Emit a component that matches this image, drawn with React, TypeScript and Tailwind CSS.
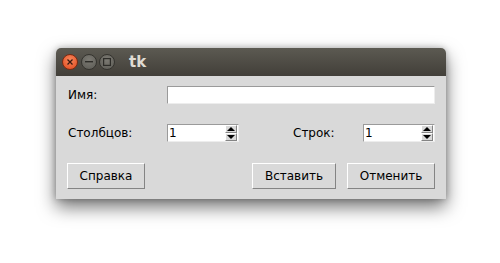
import type { ReactNode } from 'react';

function TitleButton({ kind }: { kind: 'close' | 'min' | 'max' }) {
  if (kind === 'close') {
    return (
      <div className="w-[16px] h-[16px] rounded-full border border-[#7a2a12] bg-[radial-gradient(circle_at_50%_35%,#f7875c,#e0481c)] flex items-center justify-center">
        <svg width="6" height="6" viewBox="0 0 6 6">
          <path d="M0.5 0.5 L5.5 5.5 M5.5 0.5 L0.5 5.5" stroke="#3a1a10" strokeWidth="1.3" />
        </svg>
      </div>
    );
  }
  return (
    <div className="w-[16px] h-[16px] rounded-full border border-[#35342f] bg-[radial-gradient(circle_at_50%_35%,#7c7a73,#5b5a54)] flex items-center justify-center">
      {kind === 'min' ? (
        <svg width="8" height="2" viewBox="0 0 8 2">
          <rect x="0" y="0" width="8" height="1.4" fill="#2e2d29" />
        </svg>
      ) : (
        <svg width="8" height="8" viewBox="0 0 8 8">
          <rect x="0.6" y="0.6" width="6.8" height="6.8" fill="none" stroke="#2e2d29" strokeWidth="1.2" />
        </svg>
      )}
    </div>
  );
}

function Button({ children, w }: { children: ReactNode; w: string }) {
  return (
    <button
      className={`${w} h-[26px] bg-[#d9d9d9] border border-t-white border-l-white border-b-[#848484] border-r-[#848484] text-[12px] text-black flex items-center justify-center`}
    >
      {children}
    </button>
  );
}

function Arrow({ up }: { up: boolean }) {
  return (
    <div className="h-[8px] w-[12px] bg-[#d9d9d9] border border-t-white border-l-white border-b-[#848484] border-r-[#848484] flex items-center justify-center">
      <svg width="8" height="4" viewBox="0 0 8 4">
        <path d={up ? 'M0 4 L4 0 L8 4 Z' : 'M0 0 L8 0 L4 4 Z'} fill="#000" />
      </svg>
    </div>
  );
}

function Spinbox() {
  return (
    <div className="w-[72px] h-[18px] bg-white border border-t-[#9a9a9a] border-l-[#9a9a9a] border-b-[#ededed] border-r-[#ededed] flex items-center">
      <span className="flex-1 pl-[1px] text-[12px] leading-none text-black">1</span>
      <div className="flex flex-col mr-[1px]">
        <Arrow up />
        <Arrow up={false} />
      </div>
    </div>
  );
}

export default function App() {
  return (
    <div className="w-[500px] h-[263px] bg-white pl-[56px] pt-[48px] font-['DejaVu_Sans',sans-serif]">
      <div className="w-[390px] rounded-t-[5px] shadow-[0_8px_18px_rgba(0,0,0,0.55),0_0_6px_rgba(0,0,0,0.25)]">
        <div className="h-[28px] rounded-t-[5px] bg-gradient-to-b from-[#5c5a52] to-[#423f39] flex items-center pl-[6px]">
          <div className="flex items-center gap-[2.5px]">
            <TitleButton kind="close" />
            <TitleButton kind="min" />
            <TitleButton kind="max" />
          </div>
          <span className="ml-[14px] text-[15px] font-bold text-[#dfdbd2] leading-none">tk</span>
        </div>

        <div className="h-[123px] bg-[#d9d9d9] px-[11px] pt-[10px] pb-[10px] flex flex-col text-[12px] text-black">
          <div className="flex items-center h-[18px]">
            <span className="w-[100px] pl-[1px]">Имя:</span>
            <div className="flex-1 h-[18px] bg-white border border-t-[#9a9a9a] border-l-[#9a9a9a] border-b-[#ededed] border-r-[#ededed]" />
          </div>

          <div className="flex items-center h-[18px] mt-[20px]">
            <span className="w-[100px] pl-[1px]">Столбцов:</span>
            <Spinbox />
            <span className="ml-[54px] w-[70px]">Строк:</span>
            <Spinbox />
          </div>

          <div className="flex items-center mt-auto">
            <Button w="w-[78px]">Справка</Button>
            <div className="flex-1" />
            <Button w="w-[84px]">Вставить</Button>
            <div className="w-[11px]" />
            <Button w="w-[88px]">Отменить</Button>
          </div>
        </div>
      </div>
    </div>
  );
}
